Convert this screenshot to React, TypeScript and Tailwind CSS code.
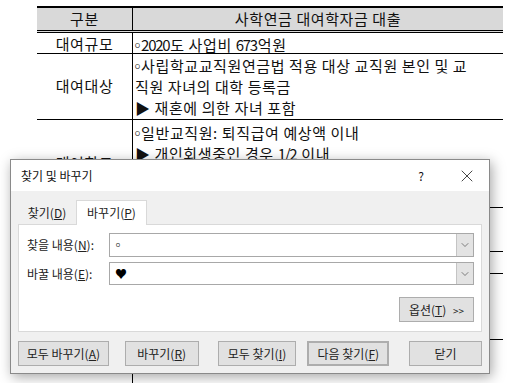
import { ChevronDown, X } from "lucide-react";

const font = "font-['Noto_Sans_CJK_KR','Noto_Sans',sans-serif]";

// small white bullet and narrow digits, as the document font draws them
const B = () => <span className="ml-[-5px] mr-[-4.5px]">◦</span>;
const N = ({ children }: { children: React.ReactNode }) => <span className="tracking-[-1.3px] mr-[1px]">{children}</span>;

function Row({ label, lines, h }: { label: string; lines: React.ReactNode[]; h: string }) {
  return (
    <div className={`grid grid-cols-[96px_1fr] border-b border-black ${h}`}>
      <div className="border-r border-black flex items-center justify-center">{label}</div>
      <div className="pl-[2px] flex flex-col justify-center leading-[21px] whitespace-nowrap">
        {lines.map((l, i) => (
          <div key={i}>{l}</div>
        ))}
      </div>
    </div>
  );
}

function Btn({ children, className = "" }: { children: React.ReactNode; className?: string }) {
  return (
    <div
      className={`h-[25px] flex items-center justify-center bg-[#e1e1e1] border border-[#adadad] text-[12px] text-[#222] ${className}`}
    >
      <span>{children}</span>
    </div>
  );
}

function Combo({ value }: { value: React.ReactNode }) {
  return (
    <div className="flex-1 h-full flex items-stretch bg-white border border-[#a8a8a8]">
      <div className="flex-1 pl-[5px] flex items-center text-[12px] text-black">{value}</div>
      <div className="w-[17px] bg-[#e3e3e3] border-l border-[#c4c4c4] flex items-center justify-center">
        <ChevronDown size={12} strokeWidth={1.3} className="text-[#444]" />
      </div>
    </div>
  );
}

export default function App() {
  return (
    <div className={`relative w-[513px] h-[383px] overflow-hidden bg-white ${font}`}>
      {/* document table behind the dialog */}
      <div className="ml-[37px] mt-[6px] w-[466px] border-t-[2px] border-black text-[15px] tracking-[0.6px] text-[#111]">
        <div className="grid grid-cols-[96px_1fr] h-[25px] bg-[#d9d9d9] border-b-[3px] border-double border-black">
          <div className="border-r border-black flex items-center justify-center">구분</div>
          <div className="flex items-center justify-center">사학연금 대여학자금 대출</div>
        </div>
        <Row
          label="대여규모"
          h="h-[21px]"
          lines={[
            <>
              <B />
              <N>2020</N>도 사업비 <N>673</N>억원
            </>,
          ]}
        />
        <Row
          label="대여대상"
          h="h-[66px]"
          lines={[
            <>
              <B />
              사립학교교직원연금법 적용 대상 교직원 본인 및 교
            </>,
            "직원 자녀의 대학 등록금",
            "▶ 재혼에 의한 자녀 포함",
          ]}
        />
        <Row
          label="대여한도"
          h="h-[88px]"
          lines={[
            <>
              <B />
              일반교직원: 퇴직급여 예상액 이내
            </>,
            <>
              ▶ 개인회생중인 경우 <N>1/2</N> 이내
            </>,
            <>
              <B />
              신규교직원: 재직기간 <N>1</N>년 미만인 경우
            </>,
            "  연간 등록금 범위 내",
          ]}
        />
        <Row
          label="대여이율"
          h="h-[44px]"
          lines={[
            <>
              <B />
              연 <N>1.7%</N> 고정금리
            </>,
            <>
              (<N>2020</N>년 기준)
            </>,
          ]}
        />
        <Row
          label="상환방법"
          h="h-[22px]"
          lines={[
            <>
              <B />
              졸업 후 원리금 균등분할 상환
            </>,
          ]}
        />
        <Row
          label="신청방법"
          h="h-[66px]"
          lines={[
            <>
              <B />
              사학연금 홈페이지에서 온라인 신청
            </>,
            "▶ 공인인증서 로그인 후 학기별 신청기간 내 신청",
            "  학기별 신청",
          ]}
        />
        <Row
          label="문의"
          h="h-[50px]"
          lines={[
            <>
              <B />
              사학연금 대여팀
            </>,
          ]}
        />
      </div>

      {/* find & replace dialog */}
      <div className="absolute left-[10px] top-[159px] w-[480px] h-[215px] flex flex-col border border-[#8a8a8a] bg-[#f0f0f0] shadow-[2px_3px_12px_rgba(0,0,0,0.35)] text-[12px] text-[#222]">
        <div className="h-[31px] bg-white flex items-center pl-[10px] pr-[12px] text-[12px] text-[#111]">
          <span className="flex-1">찾기 및 바꾸기</span>
          <span className="w-[20px] text-center mr-[26px] text-[12px]">?</span>
          <X size={20} strokeWidth={1} className="text-[#222]" />
        </div>

        <div className="flex flex-col px-[7px] pt-[8px]">
          <div className="flex items-end h-[25px]">
            <div className="w-[58px] h-[22px] flex items-center justify-center text-[#222]">
              <span>
                찾기(<u>D</u>)
              </span>
            </div>
            <div className="w-[71px] h-[25px] -mb-px flex items-center justify-center bg-white border border-b-0 border-[#d9d9d9] relative z-10">
              <span>
                바꾸기(<u>P</u>)
              </span>
            </div>
          </div>
          <div className="h-[108px] bg-white border border-[#d9d9d9] flex flex-col pl-[8px] pr-[7px] pt-[8px]">
            <div className="flex items-center h-[24px]">
              <span className="w-[82px]">
                찾을 내용(<u>N</u>):
              </span>
              <Combo value={<span className="ml-[-3px]">◦</span>} />
            </div>
            <div className="flex items-center h-[23px] mt-[5px]">
              <span className="w-[82px]">
                바꿀 내용(<u>E</u>):
              </span>
              <Combo value="♥" />
            </div>
            <div className="flex justify-end mt-[12px]">
              <Btn className="w-[75px] h-[24px]">
                옵션(<u>T</u>) <span className="ml-[4px] text-[10px]">&gt;&gt;</span>
              </Btn>
            </div>
          </div>
        </div>

        <div className="flex items-center px-[7px] mt-[9px]">
          <Btn className="w-[91px]">
            모두 바꾸기(<u>A</u>)
          </Btn>
          <Btn className="w-[74px] ml-[16px]">
            바꾸기(<u>R</u>)
          </Btn>
          <Btn className="w-[79px] ml-[19px]">
            모두 찾기(<u>I</u>)
          </Btn>
          <Btn className="w-[82px] ml-[11px] border-2 border-[#0078d7]">
            다음 찾기(<u>F</u>)
          </Btn>
          <Btn className="w-[73px] ml-[20px]">닫기</Btn>
        </div>
      </div>
    </div>
  );
}
